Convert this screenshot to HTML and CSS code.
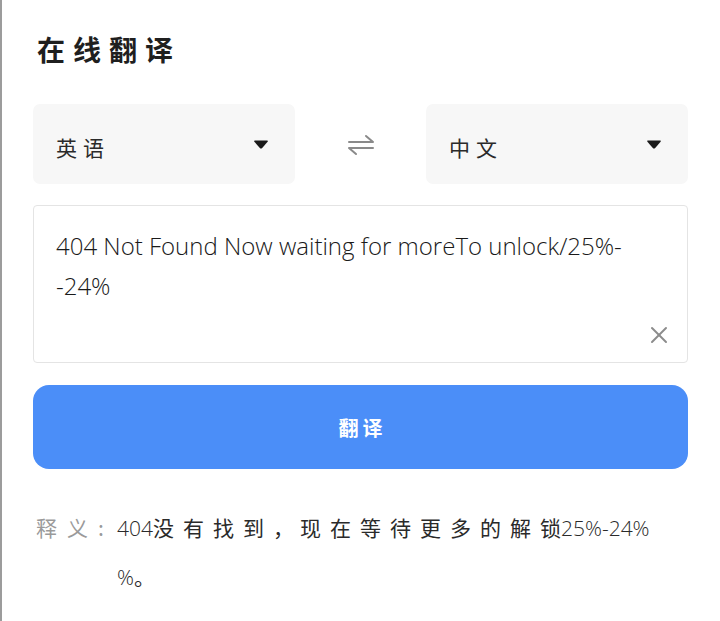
FILE: index.html
```html
<!DOCTYPE html>
<html lang="zh-CN">
<head>
<meta charset="utf-8">
<title>在线翻译</title>
<link rel="stylesheet" href="styles.css">
</head>
<body>
<div class="page">
  <h1 class="title">在线翻译</h1>

  <div class="lang-row">
    <div class="select">
      <span class="select-label">英语</span>
      <svg class="caret" width="16" height="11" viewBox="0 0 16 11"><path d="M2 1.5 H14 Q15.5 1.5 14.6 2.8 L9.2 9 Q8 10.2 6.8 9 L1.4 2.8 Q0.5 1.5 2 1.5 Z" fill="#1a1a1a"/></svg>
    </div>
    <div class="swap">
      <svg width="28" height="22" viewBox="0 0 28 22"><g fill="none" stroke="#8a8a8a" stroke-width="2" stroke-linecap="round" stroke-linejoin="round"><path d="M2 8 H26 L19 2"/><path d="M26 14 H2 L9 20"/></g></svg>
    </div>
    <div class="select">
      <span class="select-label">中文</span>
      <svg class="caret" width="16" height="11" viewBox="0 0 16 11"><path d="M2 1.5 H14 Q15.5 1.5 14.6 2.8 L9.2 9 Q8 10.2 6.8 9 L1.4 2.8 Q0.5 1.5 2 1.5 Z" fill="#1a1a1a"/></svg>
    </div>
  </div>

  <div class="input-box">
    <div class="input-text">404 Not Found Now waiting for moreTo unlock/25%-<br>-24%</div>
    <svg class="clear" width="18" height="18" viewBox="0 0 18 18"><g stroke="#8c8c8c" stroke-width="2" stroke-linecap="round"><path d="M2 2 L16 16"/><path d="M16 2 L2 16"/></g></svg>
  </div>

  <div class="btn">翻译</div>

  <div class="result">
    <span class="result-label">释义:</span>
    <div class="result-text"><span class="num">404</span><span class="cjk">没有找到</span><span class="comma">，</span><span class="cjk">现在等待更多的解</span>锁<span class="num">25%-24%</span><br><span class="num">%</span>。</div>
  </div>
</div>
</body>
</html>
```

FILE: styles.css
```css
* { box-sizing: border-box; }

html, body {
  margin: 0;
  padding: 0;
  background: #ffffff;
}

.page {
  min-height: 621px;
  border-left: 2px solid #9c9c9c;
  padding: 30px 32px 0 31px;
  font-family: "Noto Sans CJK SC", "Noto Sans", sans-serif;
  color: #222222;
}

.title {
  margin: 0 0 0 4px;
  font-size: 28px;
  line-height: 38px;
  font-weight: 700;
  letter-spacing: 8px;
  color: #1f1f1f;
}

.lang-row {
  margin-top: 36px;
  display: grid;
  grid-template-columns: 1fr 131px 1fr;
  height: 80px;
}

.select {
  background: #f7f7f7;
  border-radius: 7px;
  display: flex;
  align-items: center;
  justify-content: space-between;
  padding: 0 26px 0 23px;
}

.select-label {
  font-size: 21px;
  letter-spacing: 6px;
  color: #2a2a2a;
  padding-top: 6px;
}

.caret {
  display: block;
}

.swap {
  display: flex;
  align-items: center;
  justify-content: center;
}

.swap svg {
  display: block;
  margin-top: 2px;
}

.input-box {
  position: relative;
  margin-top: 21px;
  height: 158px;
  border: 1px solid #e4e4e4;
  border-radius: 4px;
  padding: 20px 20px 0 22px;
}

.input-text {
  font-family: "Open Sans", "Liberation Sans", sans-serif;
  font-weight: 300;
  font-size: 24px;
  line-height: 40px;
  color: #1a1a1a;
  white-space: nowrap;
}

.clear {
  position: absolute;
  right: 19px;
  bottom: 18px;
}

.btn {
  margin-top: 22px;
  height: 84px;
  border-radius: 16px;
  background: #4b8ef8;
  color: #ffffff;
  font-size: 20px;
  font-weight: 700;
  letter-spacing: 4px;
  display: flex;
  align-items: center;
  justify-content: center;
  padding-left: 4px;
}

.result {
  margin-top: 34px;
  display: flex;
  align-items: flex-start;
  font-size: 21px;
  line-height: 48px;
}

.result-label {
  width: 84px;
  padding-left: 3px;
  color: #9a9a9a;
  letter-spacing: 10px;
  flex: none;
}

.result-text {
  color: #2a2a2a;
  white-space: nowrap;
}

.num {
  font-family: "Open Sans", "Noto Sans", sans-serif;
  font-weight: 300;
  font-size: 21px;
  letter-spacing: 0;
}

.cjk {
  letter-spacing: 9px;
}

.comma {
  letter-spacing: 0;
  margin-right: 6px;
}
```
